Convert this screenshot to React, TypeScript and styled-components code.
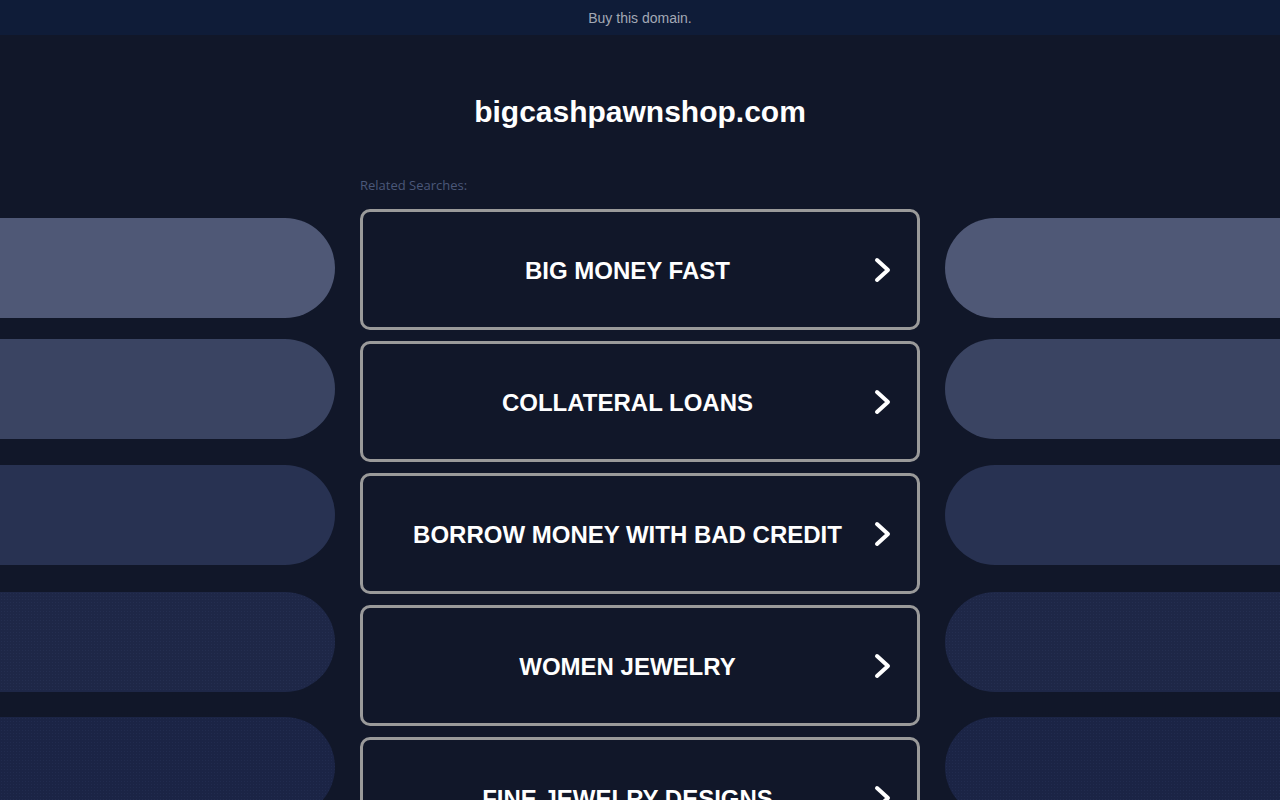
import React from 'react'
import styled, { createGlobalStyle } from 'styled-components'

const GlobalStyle = createGlobalStyle`
  html, body {
    margin: 0;
    padding: 0;
    background: #111729;
    font-family: "Liberation Sans", Arial, sans-serif;
  }
`

const Page = styled.div`
  min-height: 100vh;
  background: #111729;
  overflow: hidden;
`

const TopBar = styled.div`
  height: 35px;
  background: #0f1c38;
  display: flex;
  align-items: center;
  justify-content: center;
`

const BuyLink = styled.a`
  font-size: 14px;
  color: #a3a9b5;
  text-decoration: none;
  line-height: 16px;
`

const Title = styled.h1`
  margin: 59px 0 0;
  font-size: 30px;
  line-height: 36px;
  font-weight: 700;
  color: #ffffff;
  text-align: center;
`

const Body = styled.div`
  margin-top: 47px;
  display: grid;
  grid-template-columns: 335px 560px 335px;
  column-gap: 25px;
`

const Side = styled.div`
  display: flex;
  flex-direction: column;
  padding-top: 41px;
`

const Pill = styled.div<{ $color: string; $top: number; $side: 'left' | 'right'; $dots?: boolean }>`
  height: 100px;
  margin-top: ${(p) => p.$top}px;
  background-color: ${(p) => p.$color};
  background-image: ${(p) =>
    p.$dots ? 'radial-gradient(rgba(90, 110, 160, 0.1) 0.6px, transparent 0.9px)' : 'none'};
  background-size: 3px 3px;
  border-radius: ${(p) => (p.$side === 'left' ? '0 50px 50px 0' : '50px 0 0 50px')};
`

const Center = styled.div`
  display: flex;
  flex-direction: column;
`

const Label = styled.div`
  font-family: "Open Sans", "Liberation Sans", sans-serif;
  font-size: 13px;
  line-height: 16px;
  color: #4b5879;
  margin-bottom: 16px;
`

const SearchButton = styled.a`
  box-sizing: border-box;
  height: 121px;
  margin-bottom: 11px;
  border: 3px solid #9a9a9a;
  border-radius: 10px;
  display: flex;
  align-items: center;
  padding: 0 26px 0 18px;
  text-decoration: none;
  cursor: pointer;
`

const ButtonText = styled.span`
  flex: 1;
  text-align: center;
  font-size: 24px;
  font-weight: 700;
  color: #ffffff;
  line-height: 28px;
  padding-top: 2px;
`

const Chevron = () => (
  <svg width="17" height="26" viewBox="0 0 17 26" fill="none">
    <path
      d="M3 3 L14 13 L3 23"
      stroke="#ffffff"
      strokeWidth="4"
      strokeLinecap="round"
      strokeLinejoin="round"
    />
  </svg>
)

const searches = [
  'BIG MONEY FAST',
  'COLLATERAL LOANS',
  'BORROW MONEY WITH BAD CREDIT',
  'WOMEN JEWELRY',
  'FINE JEWELRY DESIGNS',
]

const pills = [
  { color: '#4f5876', top: 0 },
  { color: '#3a4462', top: 21 },
  { color: '#283252', top: 26 },
  { color: '#1e2747', top: 27, dots: true },
  { color: '#1b2445', top: 25, dots: true },
]

export default function App() {
  return (
    <Page>
      <GlobalStyle />
      <TopBar>
        <BuyLink href="#">Buy this domain.</BuyLink>
      </TopBar>
      <Title>bigcashpawnshop.com</Title>
      <Body>
        <Side>
          {pills.map((p, i) => (
            <Pill key={i} $side="left" $color={p.color} $top={p.top} $dots={p.dots} />
          ))}
        </Side>
        <Center>
          <Label>Related Searches:</Label>
          {searches.map((s) => (
            <SearchButton key={s}>
              <ButtonText>{s}</ButtonText>
              <Chevron />
            </SearchButton>
          ))}
        </Center>
        <Side>
          {pills.map((p, i) => (
            <Pill key={i} $side="right" $color={p.color} $top={p.top} $dots={p.dots} />
          ))}
        </Side>
      </Body>
    </Page>
  )
}
